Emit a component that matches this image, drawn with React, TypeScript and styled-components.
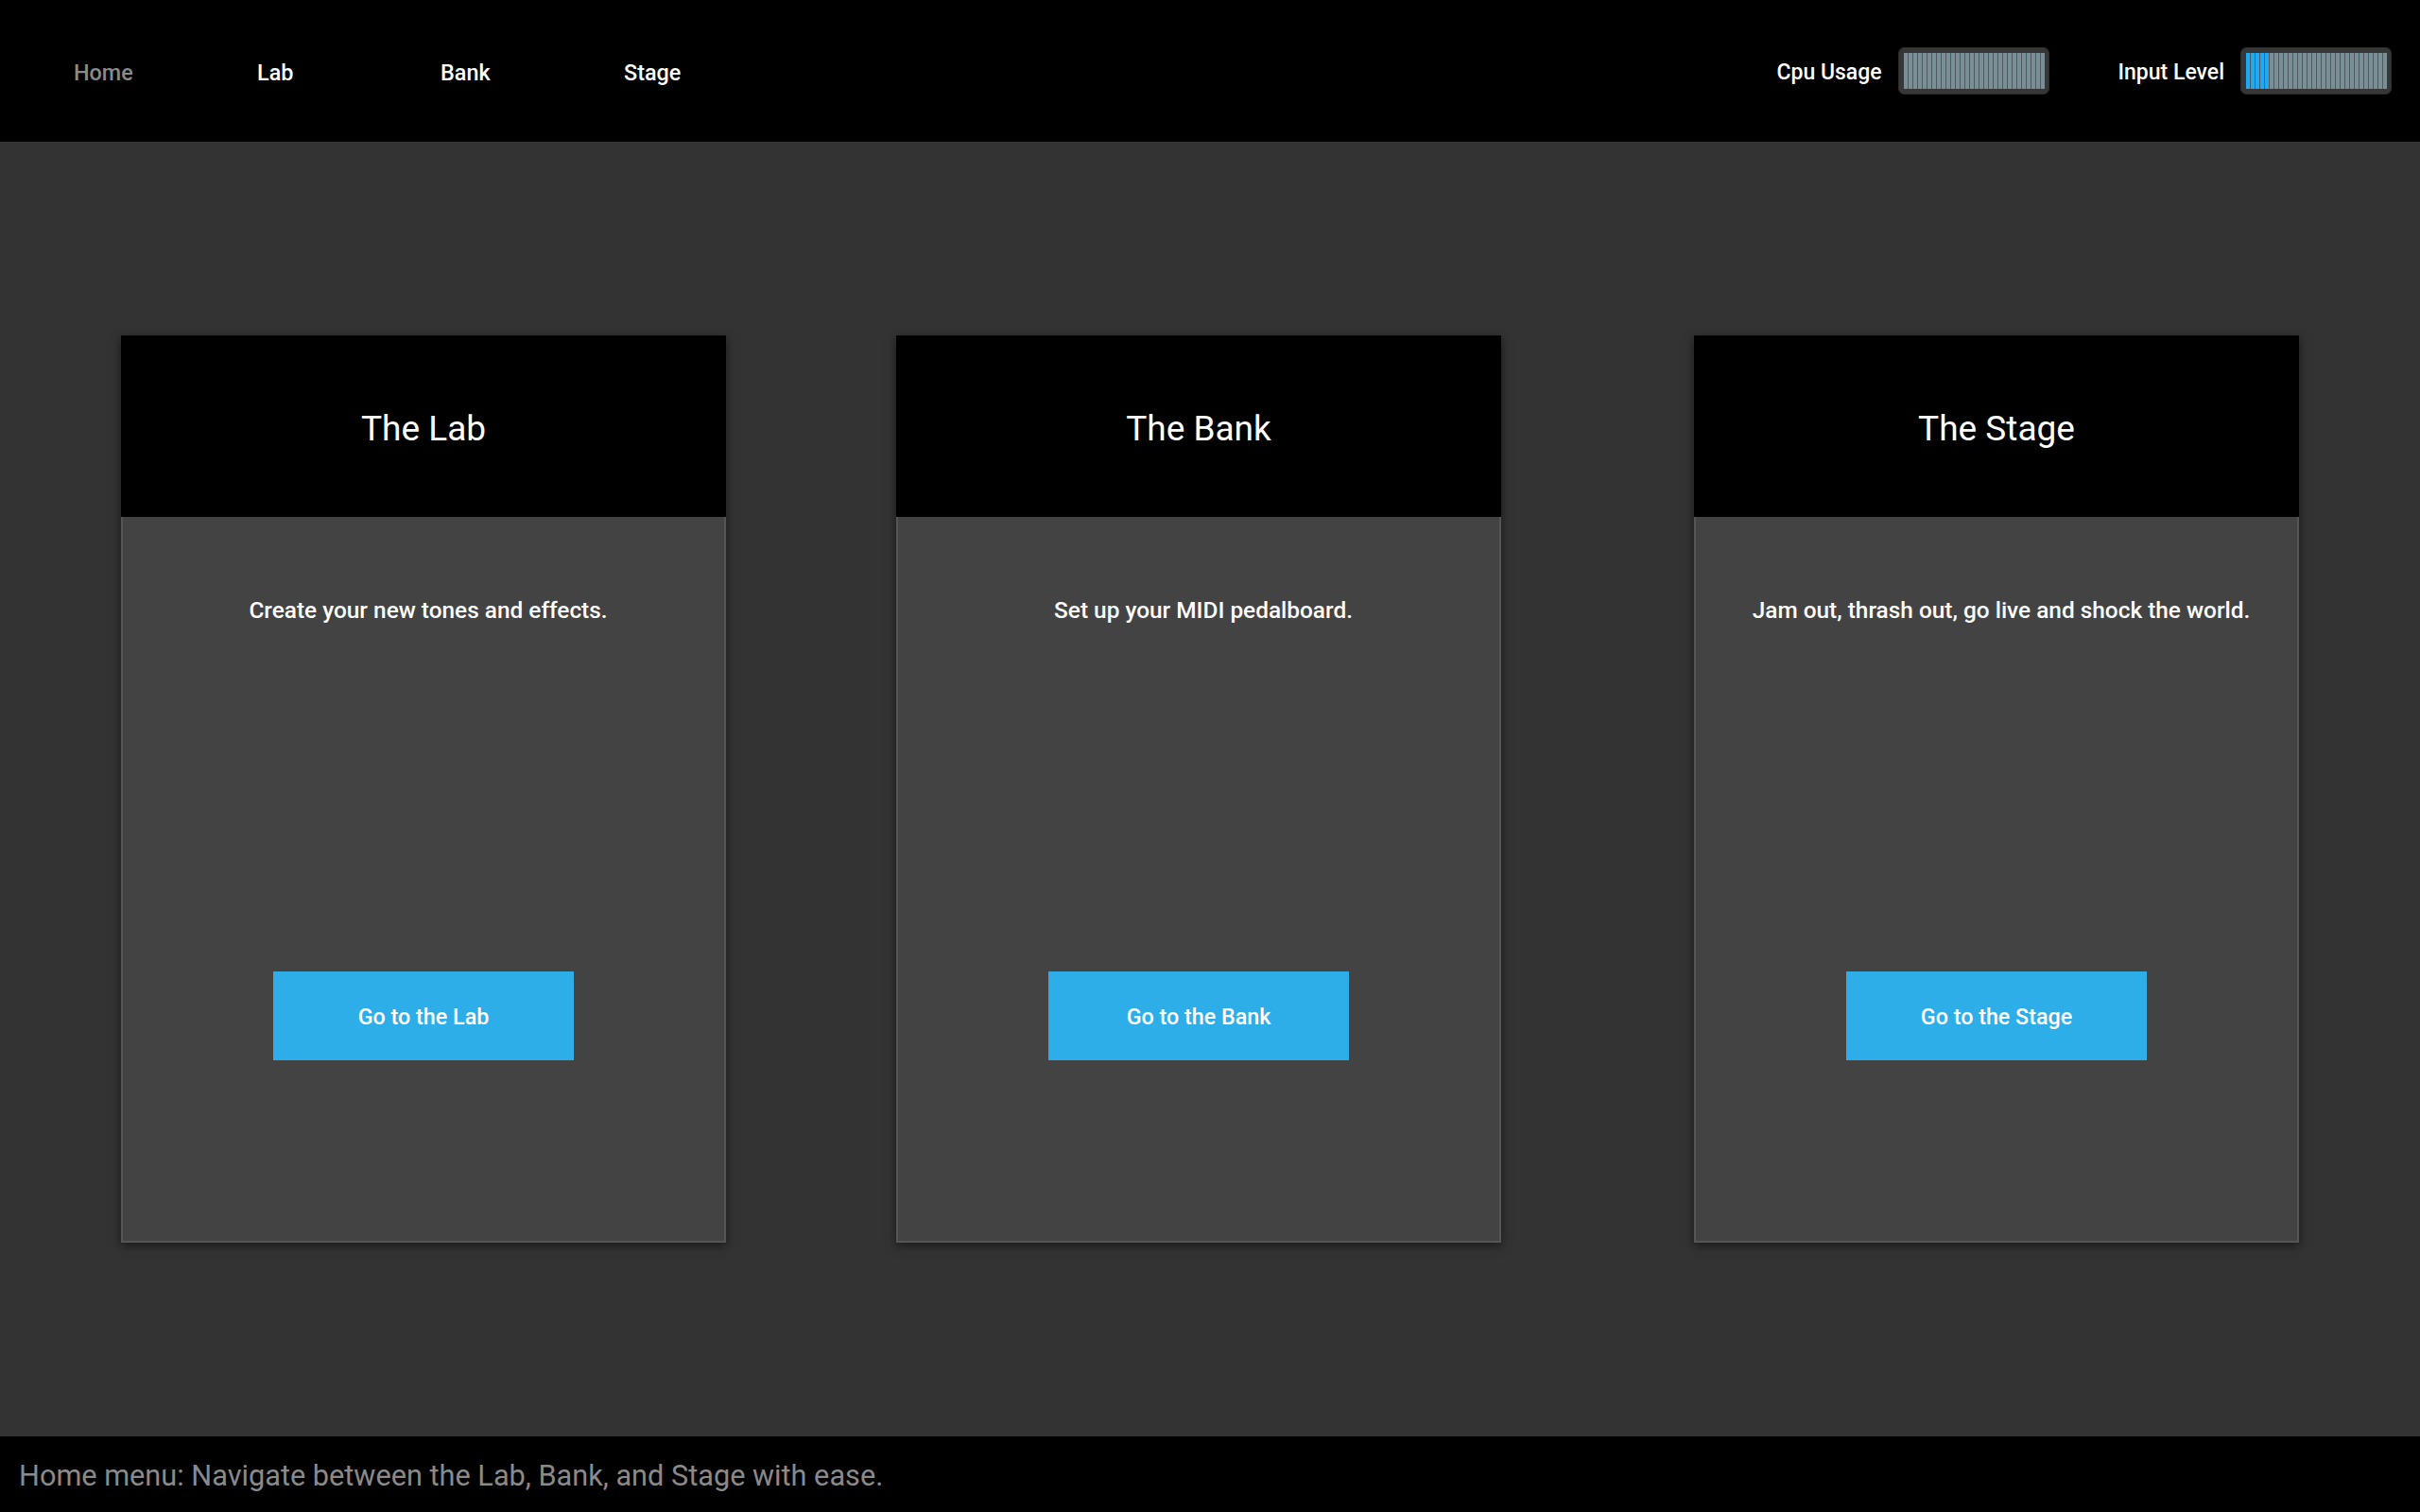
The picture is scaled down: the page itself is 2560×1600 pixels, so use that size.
import React from "react";
import styled, { createGlobalStyle } from "styled-components";

const GlobalStyle = createGlobalStyle`
  html, body {
    margin: 0;
    padding: 0;
    background: #333333;
    font-family: Roboto, "Liberation Sans", Arial, sans-serif;
  }
  * { box-sizing: border-box; }
`;

const Page = styled.div`
  display: flex;
  flex-direction: column;
  width: 2560px;
  height: 1600px;
  background: #333333;
`;

const TopBar = styled.header`
  height: 150px;
  flex: none;
  background: #000000;
  display: flex;
  align-items: center;
  justify-content: space-between;
  padding: 0 30px 0 78px;
`;

const Nav = styled.nav`
  display: flex;
  align-items: center;
`;

const NavItem = styled.a<{ $active?: boolean }>`
  width: 194px;
  padding-top: 3px;
  font-size: 23.4px;
  font-weight: 500;
  color: ${(p) => (p.$active ? "#8a8a8a" : "#ffffff")};
  text-decoration: none;
  cursor: pointer;
`;

const Meters = styled.div`
  display: flex;
  align-items: center;
  gap: 73px;
`;

const MeterGroup = styled.div`
  display: flex;
  align-items: center;
  gap: 17px;
`;

const MeterLabel = styled.span`
  padding-top: 3px;
  font-size: 23px;
  font-weight: 500;
  color: #ffffff;
`;

const MeterFrame = styled.div`
  width: 160px;
  height: 50px;
  padding: 6px;
  background: #373737;
  border-radius: 7px;
  box-shadow: inset 0 0 0 1px #2c2c2c;
  display: flex;
`;

const MeterBars = styled.div`
  flex: 1;
  display: flex;
  gap: 1px;
  background: #4e5a5d;
`;

const MeterBar = styled.div<{ $lit: boolean }>`
  width: 4px;
  height: 38px;
  background: ${(p) => (p.$lit ? "#1ea9f2" : "#7a8f95")};
`;

const Main = styled.main`
  flex: 1;
  display: flex;
  align-items: center;
  justify-content: space-between;
  padding: 0 128px;
`;

const Card = styled.section<{ $shift?: number }>`
  width: 640px;
  height: 960px;
  display: flex;
  flex-direction: column;
  margin-right: ${(p) => p.$shift ?? 0}px;
  box-shadow: 0 3px 10px rgba(0, 0, 0, 0.55);
`;

const CardHeader = styled.div`
  height: 192px;
  flex: none;
  background: #000000;
  display: flex;
  align-items: center;
  justify-content: center;
  padding-top: 5px;
  font-size: 37px;
  font-weight: 400;
  color: #ffffff;
`;

const CardBody = styled.div`
  flex: 1;
  background: #434343;
  border: 2px solid #555555;
  border-top: none;
  display: flex;
  flex-direction: column;
  align-items: center;
  padding-top: 85px;
`;

const Description = styled.p`
  margin: 0;
  padding-left: 10px;
  font-size: 24.4px;
  font-weight: 500;
  line-height: 28px;
  color: #ffffff;
  text-align: center;
`;

const GoButton = styled.button`
  margin-top: 368px;
  width: 318px;
  height: 94px;
  border: none;
  background: #2eaee8;
  color: #ffffff;
  font-family: Roboto, "Liberation Sans", Arial, sans-serif;
  font-size: 23.3px;
  font-weight: 500;
  padding-top: 2px;
  cursor: pointer;
`;

const Footer = styled.footer`
  height: 80px;
  flex: none;
  background: #000000;
  display: flex;
  align-items: center;
  padding: 3px 0 0 20px;
  font-size: 30.7px;
  color: #8a8a8a;
`;

const Meter: React.FC<{ level: number }> = ({ level }) => (
  <MeterFrame>
    <MeterBars>
      {Array.from({ length: 30 }, (_, i) => (
        <MeterBar key={i} $lit={i < level} />
      ))}
    </MeterBars>
  </MeterFrame>
);

const cards = [
  { title: "The Lab", text: "Create your new tones and effects.", button: "Go to the Lab", shift: 0 },
  { title: "The Bank", text: "Set up your MIDI pedalboard.", button: "Go to the Bank", shift: 24 },
  { title: "The Stage", text: "Jam out, thrash out, go live and shock the world.", button: "Go to the Stage", shift: 0 },
];

export default function App() {
  return (
    <>
      <GlobalStyle />
      <Page>
        <TopBar>
          <Nav>
            <NavItem $active>Home</NavItem>
            <NavItem>Lab</NavItem>
            <NavItem>Bank</NavItem>
            <NavItem>Stage</NavItem>
          </Nav>
          <Meters>
            <MeterGroup>
              <MeterLabel>Cpu Usage</MeterLabel>
              <Meter level={0} />
            </MeterGroup>
            <MeterGroup>
              <MeterLabel>Input Level</MeterLabel>
              <Meter level={5} />
            </MeterGroup>
          </Meters>
        </TopBar>
        <Main>
          {cards.map((c) => (
            <Card key={c.title} $shift={c.shift}>
              <CardHeader>{c.title}</CardHeader>
              <CardBody>
                <Description>{c.text}</Description>
                <GoButton>{c.button}</GoButton>
              </CardBody>
            </Card>
          ))}
        </Main>
        <Footer>Home menu: Navigate between the Lab, Bank, and Stage with ease.</Footer>
      </Page>
    </>
  );
}
